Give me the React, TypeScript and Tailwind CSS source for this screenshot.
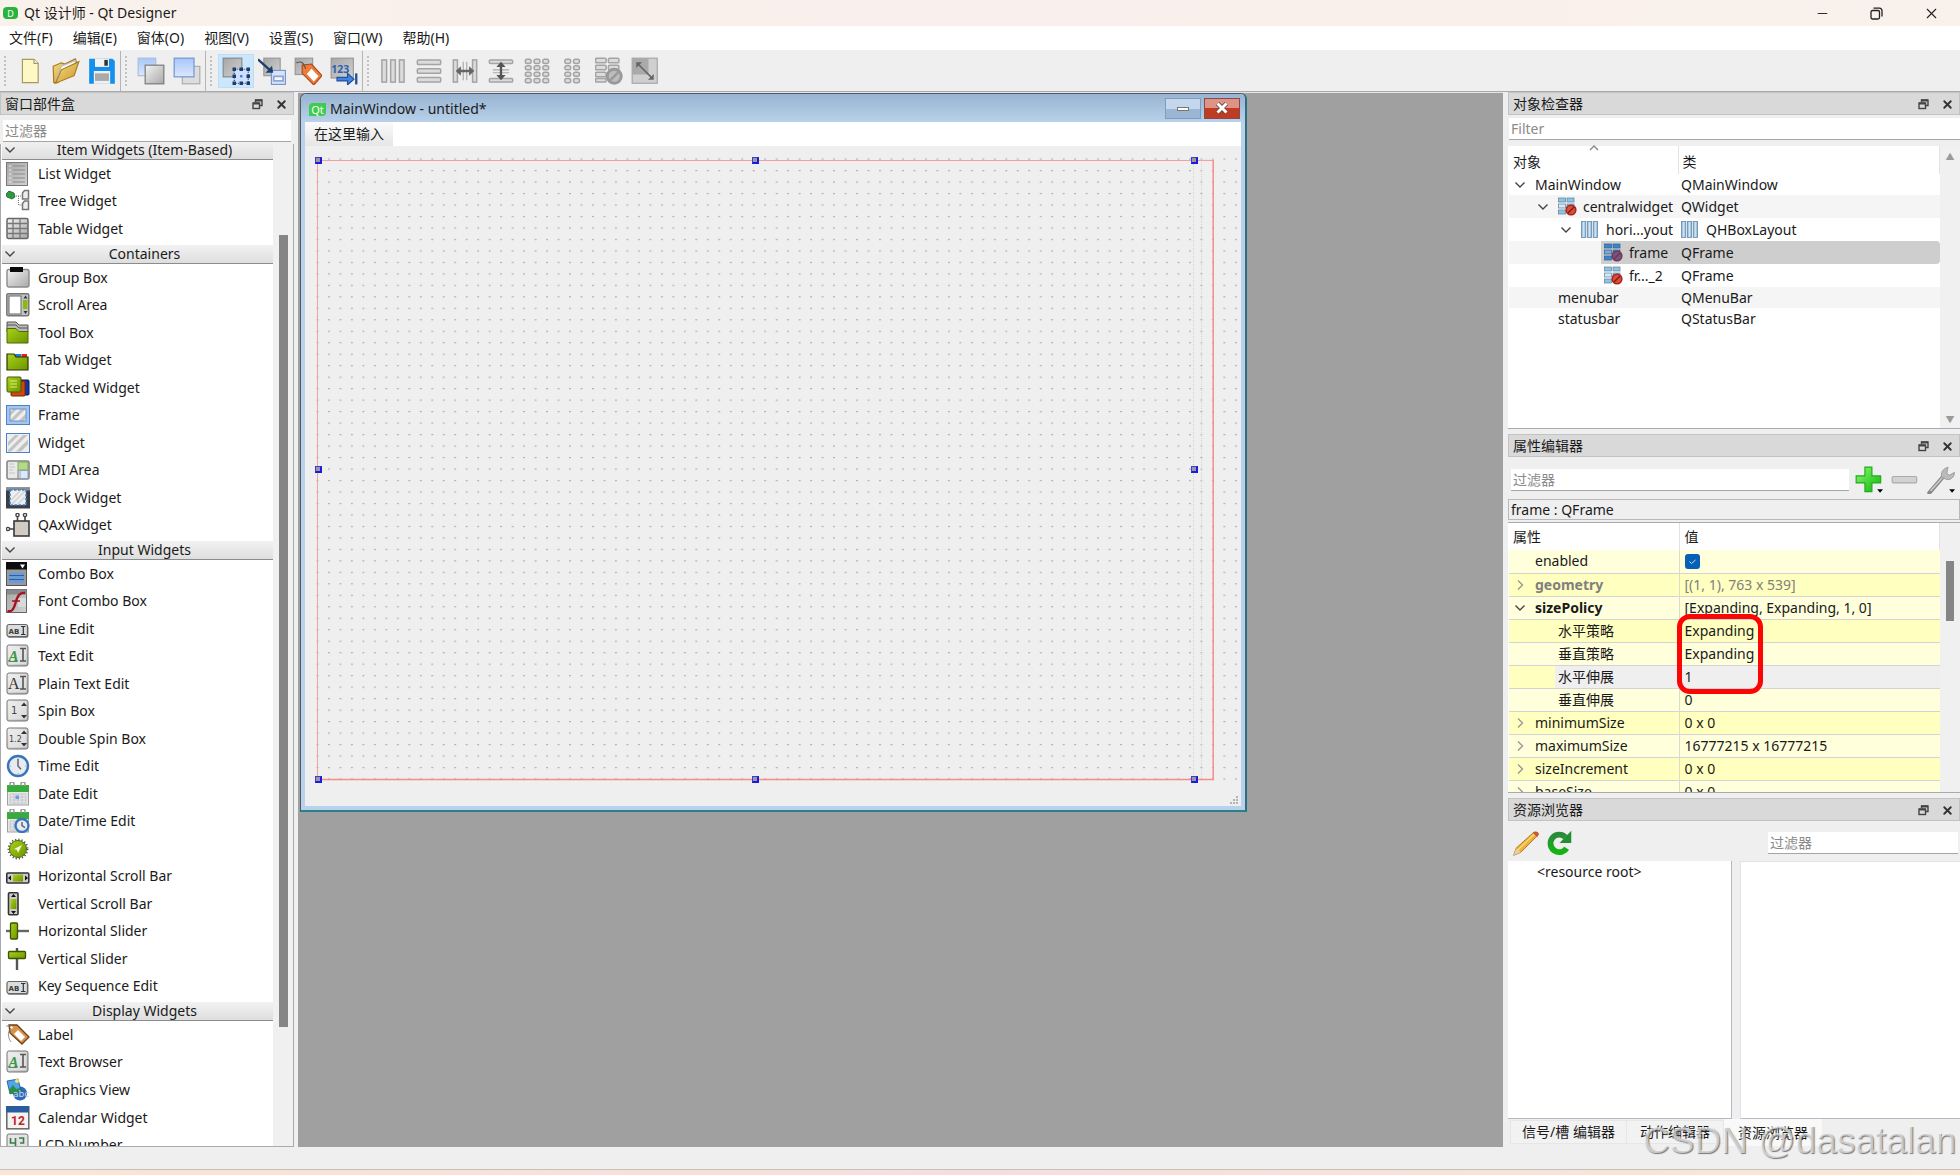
import type { ReactNode } from 'react';
import { Minus, X } from 'lucide-react';

interface WidgetItem {
  label: string;
  icon: ReactNode;
}

interface WidgetCategory {
  title: string;
  listClass: string;
  items: WidgetItem[];
}

interface ObjectRow {
  name: string;
  cls: string;
  indent: string;
  icon?: 'broken' | 'hbox';
  open?: boolean;
  selected?: boolean;
}

interface PropertyRow {
  name: string;
  value: string;
  kind: 'leaf' | 'closed' | 'open' | 'child';
  tone: string;
  nameClass?: string;
  valueClass?: string;
}

function Svg({ children, size = 24 }: { children: ReactNode; size?: number }) {
  return (
    <svg width={size} height={size} viewBox="0 0 24 24" fill="none" className="shrink-0" aria-hidden="true">
      {children}
    </svg>
  );
}

// Shared gradients, referenced by id from all the icons
function Gradients() {
  return (
    <svg width="0" height="0" className="absolute" aria-hidden="true">
      <defs>
        <linearGradient id="gray" x1="0" y1="0" x2="1" y2="1">
          <stop offset="0" stopColor="#f4f4f4" />
          <stop offset="1" stopColor="#a8a8a8" />
        </linearGradient>
        <linearGradient id="panel" x1="0" y1="0" x2="1" y2="1">
          <stop offset="0" stopColor="#a6a6a6" />
          <stop offset="1" stopColor="#d2d2d2" />
        </linearGradient>
        <linearGradient id="blue" x1="0" y1="0" x2="0" y2="1">
          <stop offset="0" stopColor="#a8c6fb" />
          <stop offset="1" stopColor="#dbe7fd" />
        </linearGradient>
        <linearGradient id="green" x1="0" y1="0" x2="1" y2="1">
          <stop offset="0" stopColor="#a9d21a" />
          <stop offset="1" stopColor="#6c9400" />
        </linearGradient>
        <linearGradient id="gold" x1="0" y1="0" x2="1" y2="1">
          <stop offset="0" stopColor="#f7dc84" />
          <stop offset="1" stopColor="#c9962a" />
        </linearGradient>
        <linearGradient id="steel" x1="0" y1="0" x2="1" y2="0">
          <stop offset="0" stopColor="#7fa9c8" />
          <stop offset="0.5" stopColor="#cfe8f8" />
          <stop offset="1" stopColor="#7fa9c8" />
        </linearGradient>
        <linearGradient id="lime" x1="0" y1="0" x2="1" y2="1">
          <stop offset="0" stopColor="#8dfb6f" />
          <stop offset="1" stopColor="#0cb30a" />
        </linearGradient>
        <linearGradient id="refresh" x1="0" y1="0" x2="0" y2="1">
          <stop offset="0" stopColor="#2c8a3c" />
          <stop offset="1" stopColor="#12b512" />
        </linearGradient>
      </defs>
    </svg>
  );
}

function TextBoxIcon({ children }: { children: ReactNode }) {
  return (
    <Svg>
      <rect x="1" y="1" width="21" height="21" rx="2" fill="url(#gray)" stroke="#777" />
      <rect x="2.500" y="2.500" width="18" height="18" fill="#ececec" fillOpacity="0.700" />
      {children}
    </Svg>
  );
}

function CursorBar() {
  return <path d="M14 4.500h6M14 17h6M17 4.500V17" stroke="#555" strokeWidth="1.600" />;
}

function AbiIcon() {
  return (
    <Svg>
      <rect x="1.500" y="8.500" width="21" height="12.500" rx="2" fill="#8f8f8f" />
      <rect x="1" y="7.500" width="20.500" height="12" rx="2" fill="#dcdcdc" stroke="#666" strokeWidth="1.200" />
      <text x="2.500" y="16.500" fontSize="7" fontWeight="700" fontFamily="DejaVu Sans" fill="#3a3a3a">AB</text>
      <path d="M15 9.500h4.500M15 17.500h4.500M17.300 9.500v8" stroke="#333" strokeWidth="1.200" />
    </Svg>
  );
}

function RichTextIcon() {
  return (
    <TextBoxIcon>
      <text x="2.500" y="16.500" fontSize="15" fontStyle="italic" fontWeight="700" fontFamily="Liberation Serif" fill="#3f9450">A</text>
      <path d="M2.500 17.500h9" stroke="#3f9450" />
      <CursorBar />
    </TextBoxIcon>
  );
}

function HatchIcon({ inner = false }: { inner?: boolean }) {
  return (
    <Svg>
      <rect x="0.500" y="2.500" width="23" height="19" fill="#eee" stroke="#4d82c4" />
      <path d="M2 19L17 4h4.500L5 20.500H2zM10 20.500L22 8.500v5l-7 7zM2 11l7-7h4L2 15z" fill="#c3c3c3" />
      {inner && <rect x="2.500" y="4.500" width="19" height="15" stroke="#a5c5ee" strokeWidth="3" />}
      {inner && <rect x="4" y="6" width="16" height="12" stroke="#5b8ac8" strokeWidth="0.800" />}
    </Svg>
  );
}

function ClockFace({ cx, cy, r }: { cx: number; cy: number; r: number }) {
  return (
    <g>
      <circle cx={cx} cy={cy} r={r} fill="#e6ebf0" stroke="#3a74bd" strokeWidth="2.400" />
      <path d={`M${cx} ${cy - r + 3}V${cy}l3 ${r / 3}`} stroke="#667" strokeWidth="1.500" />
    </g>
  );
}

function CalendarPage() {
  return (
    <g>
      <rect x="1.500" y="4" width="21" height="19" fill="#e6e6e6" stroke="#a0a0a0" />
      <path d="M1 3h22v7H1z" fill="#39ab3d" />
      <path d="M4 4v-2a2 2 0 014 0v2M15 4v-2a2 2 0 014 0v2" stroke="#999" strokeWidth="1.500" />
      <path d="M4 12h16M4 15h16M4 18h16M4 21h16M4 12v9M8 12v9M12 12v9M16 12v9M20 12v9" stroke="#bcc1ca" strokeWidth="0.800" />
    </g>
  );
}

const icons = {
  list: (
    <Svg>
      <rect x="0.500" y="0.500" width="21" height="23" fill="url(#panel)" stroke="#777" />
      <path d="M3 4h2M3 8h2M3 12h2M3 16h2M3 20h2" stroke="#eee" />
      <path d="M7 4h12M7 8h12M7 12h12M7 16h12M7 20h12" stroke="#8b8b8b" />
    </Svg>
  ),
  tree: (
    <Svg>
      <path d="M0 5l3-3 5 2 1 4-3 2-5-2z" fill="#2f9a45" stroke="#17612a" strokeWidth="0.800" />
      <path d="M10 7h6M12.500 7v9h4" stroke="#777" strokeDasharray="1 1" />
      <path d="M16.500 4l2-2.500h4V10h-6zM16.500 14.500l2-2.500h4v8.500h-6z" fill="#eee" stroke="#777" strokeWidth="1.500" />
    </Svg>
  ),
  table: (
    <Svg>
      <rect x="1" y="1.500" width="21" height="20" rx="1.500" fill="url(#gray)" stroke="#666" strokeWidth="1.500" />
      <path d="M1 6.500h21M1 11.500h21M1 16.500h21M7 1.500v20M14 1.500v20" stroke="#777" strokeWidth="1.300" />
    </Svg>
  ),
  groupBox: (
    <Svg>
      <rect x="1" y="3.500" width="22" height="17.500" rx="2" fill="url(#gray)" stroke="#8a8a8a" strokeWidth="1.400" />
      <path d="M4 1h13v5H4z" fill="#0a0a0a" />
    </Svg>
  ),
  scrollArea: (
    <Svg>
      <rect x="0.800" y="0.800" width="22" height="22" rx="1.500" fill="#c4c4c4" stroke="#777" strokeWidth="1.500" />
      <rect x="3" y="3" width="12" height="18" fill="#fff" stroke="#666" />
      <rect x="17" y="7" width="4.500" height="9" fill="#8bb80b" />
      <path d="M17.500 5.500l2-3 2 3zM17.500 18l2 3 2-3z" fill="#333" />
    </Svg>
  ),
  toolBox: (
    <Svg>
      <path d="M1 1h9l3 3h9v7H1z" fill="#bbb" stroke="#555" />
      <path d="M1 4h9l3 3h9" stroke="#555" />
      <path d="M1 7.500h9l3 3h9V22H1z" fill="url(#green)" stroke="#4d6b00" />
    </Svg>
  ),
  tabWidget: (
    <Svg>
      <path d="M9 6h6v5H9z" fill="#1d7fe0" />
      <path d="M15.500 6H21v5h-5.500z" fill="#e02222" />
      <path d="M1 6h7l2 3h12v13H1z" fill="url(#green)" stroke="#2b3500" strokeWidth="1.200" />
    </Svg>
  ),
  stacked: (
    <Svg>
      <rect x="10" y="4" width="13" height="15" rx="1" fill="#1736a0" stroke="#0a1a55" />
      <rect x="5" y="5" width="14" height="15" rx="1" fill="#cf4612" stroke="#7b2502" />
      <rect x="1" y="1" width="14" height="15" rx="1" fill="url(#green)" stroke="#435a00" />
      <path d="M4 5h7M4 8h7M4 11h7" stroke="#d9f07b" />
    </Svg>
  ),
  mdi: (
    <Svg>
      <rect x="1" y="3" width="22" height="18" rx="1.500" fill="#e9e9e9" stroke="#858585" strokeWidth="1.600" />
      <path d="M12 4h10v8H12z" fill="#b4d987" stroke="#7a9c58" strokeWidth="0.800" />
      <path d="M3 6h5M3 9h6M3 12h4M3 15h6" stroke="#c6c6c6" />
      <path d="M12 12v8.500" stroke="#777" />
      <rect x="14" y="12.500" width="8" height="8" fill="#dce8f8" stroke="#7d95bc" strokeWidth="0.800" />
    </Svg>
  ),
  dock: (
    <Svg>
      <rect y="1.500" width="24" height="21" fill="#3a3f45" />
      <path d="M0 1.500h24v3H0z" fill="#8a8d90" />
      <rect x="4" y="4" width="16" height="15" fill="#eee" stroke="#3d7fd0" strokeWidth="1.600" strokeDasharray="2.500 1.500" />
      <path d="M5 14l9-9M6 18L19 5M12 18l7-7" stroke="#d3d3d3" strokeWidth="1.500" />
    </Svg>
  ),
  qax: (
    <Svg>
      <circle cx="11.500" cy="2" r="1.600" stroke="#444" strokeWidth="1.400" />
      <circle cx="19" cy="2" r="1.600" stroke="#444" strokeWidth="1.400" />
      <circle cx="2" cy="16" r="1.600" stroke="#444" strokeWidth="1.400" />
      <path d="M11.500 3.500V8M19 3.500V8M3.500 16H8" stroke="#444" strokeWidth="1.600" />
      <rect x="8" y="8" width="15" height="15" fill="#d1cbc3" stroke="#3a3a3a" strokeWidth="1.600" />
    </Svg>
  ),
  combo: (
    <Svg>
      <rect x="0.500" y="1" width="20" height="22.500" fill="#9a9a9a" stroke="#555" />
      <path d="M0 0h21v7.500H0z" fill="#0d0d0d" />
      <path d="M14 2.500h5l-2.500 4z" fill="#fff" />
      <path d="M3 10.500h15v10.500H3z" fill="#6b9bd6" />
      <path d="M3 13.500h15M3 17.500h15" stroke="#2f5f9e" />
    </Svg>
  ),
  fontCombo: (
    <Svg>
      <rect x="0.500" y="0.500" width="20" height="23" fill="url(#panel)" stroke="#666" />
      <path d="M1 0.500h19.500v5H1z" fill="#8a8a8a" />
      <path d="M12 9h8v9h-8z" fill="#d9d9d9" />
      <path d="M1.500 22c4 1 6-1 8-8s4-11 9.500-10" stroke="#a51220" strokeWidth="2.400" />
      <path d="M6 12h8" stroke="#a51220" strokeWidth="1.500" />
    </Svg>
  ),
  plainText: (
    <TextBoxIcon>
      <text x="2" y="17" fontSize="16" fontFamily="Liberation Serif" fill="#333">A</text>
      <CursorBar />
    </TextBoxIcon>
  ),
  spin: (
    <TextBoxIcon>
      <text x="5" y="15" fontSize="10" fontFamily="DejaVu Sans" fill="#444">1</text>
      <path d="M15 7l3-3.500L21 7zM15 16l3 3.500 3-3.500z" fill="#333" />
    </TextBoxIcon>
  ),
  doubleSpin: (
    <TextBoxIcon>
      <text x="3" y="15" fontSize="8" fontFamily="DejaVu Sans" fill="#444">1.2</text>
      <path d="M15 7l3-3.500L21 7zM15 16l3 3.500 3-3.500z" fill="#333" />
    </TextBoxIcon>
  ),
  time: (
    <Svg>
      <ClockFace cx={12} cy={12} r={10} />
      <path d="M12 4v1M12 19v1M4 12h1M19 12h1" stroke="#9aa" />
    </Svg>
  ),
  date: (
    <Svg>
      <CalendarPage />
      <path d="M9.500 13.500h3.500v3.500H9.500z" fill="#6a9de0" />
    </Svg>
  ),
  dateTime: (
    <Svg>
      <CalendarPage />
      <ClockFace cx={16} cy={16.5} r={6.5} />
    </Svg>
  ),
  dial: (
    <Svg>
      <circle cx="12" cy="12" r="9.500" stroke="#555" strokeWidth="2" strokeDasharray="1.200 2" />
      <circle cx="12" cy="12" r="8.500" fill="url(#green)" stroke="#4f6d05" />
      <path d="M8 12l8-4-4 8-1-3z" fill="#f0f7d2" />
    </Svg>
  ),
  hScroll: (
    <Svg>
      <rect x="0.800" y="9" width="22" height="10" rx="1" fill="#ccc" stroke="#333" strokeWidth="1.600" />
      <rect x="7" y="10.500" width="10" height="7" fill="url(#green)" />
      <path d="M5 11.500v5L2 14zM19 11.500v5l3-2.500z" fill="#111" />
    </Svg>
  ),
  vScroll: (
    <Svg>
      <rect x="2.500" y="0.800" width="9.500" height="22" rx="1" fill="#ccc" stroke="#333" strokeWidth="1.600" />
      <rect x="4.500" y="7" width="6" height="10" fill="url(#green)" />
      <path d="M5 5h5L7.500 2zM5 19h5l-2.500 3z" fill="#111" />
    </Svg>
  ),
  hSlider: (
    <Svg>
      <path d="M0 12h23" stroke="#666" strokeWidth="2.400" />
      <rect x="4.500" y="4" width="7" height="16" rx="1" fill="url(#green)" stroke="#3e5200" strokeWidth="1.300" />
    </Svg>
  ),
  vSlider: (
    <Svg>
      <path d="M11 1v22" stroke="#555" strokeWidth="2.400" />
      <rect x="2.500" y="4.500" width="17" height="7" rx="1" fill="url(#green)" stroke="#3e5200" strokeWidth="1.300" />
    </Svg>
  ),
  label: (
    <Svg>
      <path d="M3 2l8 0 12 12-7 7L4 10z" fill="#d9924a" stroke="#6c4218" strokeWidth="1.300" />
      <path d="M12 7l7 7-4 4-7-7z" fill="#fff" />
      <circle cx="5.500" cy="4.500" r="1.300" fill="#fff" />
      <path d="M0 3h5M5 5c-4 4-3 10 0 14" stroke="#777" strokeWidth="0.800" />
    </Svg>
  ),
  graphics: (
    <Svg>
      <circle cx="14" cy="15.500" r="7" fill="#2b6cb8" />
      <path d="M1 3l11-2 3 12-11 3z" fill="#4fa5ee" stroke="#1c4f90" strokeWidth="0.800" />
      <path d="M3 12l4-5 3 4 4-1 1 3-11 3z" fill="#2d8f3c" />
      <circle cx="11" cy="3" r="2" fill="#ffe25a" />
      <text x="7" y="19" fontSize="9" fontFamily="DejaVu Sans" fill="#c9d6e8">abc</text>
    </Svg>
  ),
  calendar: (
    <Svg>
      <rect x="0.800" y="0.800" width="22" height="22" fill="#f3f3f3" stroke="#666" strokeWidth="1.500" />
      <path d="M0 0h23v6.500H0z" fill="#2a5d9e" />
      <text x="5" y="19" fontSize="12" fontWeight="700" fontFamily="Roboto" fill="#c22222">12</text>
    </Svg>
  ),
  lcd: (
    <Svg>
      <rect x="1" y="1" width="21" height="21" rx="2" fill="#e4e4e4" stroke="#777" />
      <path d="M4.500 5v5h5M9.500 5v8M13 5h4.500v5H14" stroke="#3b7a4c" strokeWidth="1.600" />
    </Svg>
  ),
};

const categories: WidgetCategory[] = [
  {
    title: 'Item Widgets (Item-Based)',
    listClass: 'h-[83px]',
    items: [
      { label: 'List Widget', icon: icons.list },
      { label: 'Tree Widget', icon: icons.tree },
      { label: 'Table Widget', icon: icons.table },
    ],
  },
  {
    title: 'Containers',
    listClass: 'h-[275px]',
    items: [
      { label: 'Group Box', icon: icons.groupBox },
      { label: 'Scroll Area', icon: icons.scrollArea },
      { label: 'Tool Box', icon: icons.toolBox },
      { label: 'Tab Widget', icon: icons.tabWidget },
      { label: 'Stacked Widget', icon: icons.stacked },
      { label: 'Frame', icon: <HatchIcon inner /> },
      { label: 'Widget', icon: <HatchIcon /> },
      { label: 'MDI Area', icon: icons.mdi },
      { label: 'Dock Widget', icon: icons.dock },
      { label: 'QAxWidget', icon: icons.qax },
    ],
  },
  {
    title: 'Input Widgets',
    listClass: 'h-[440px]',
    items: [
      { label: 'Combo Box', icon: icons.combo },
      { label: 'Font Combo Box', icon: icons.fontCombo },
      { label: 'Line Edit', icon: <AbiIcon /> },
      { label: 'Text Edit', icon: <RichTextIcon /> },
      { label: 'Plain Text Edit', icon: icons.plainText },
      { label: 'Spin Box', icon: icons.spin },
      { label: 'Double Spin Box', icon: icons.doubleSpin },
      { label: 'Time Edit', icon: icons.time },
      { label: 'Date Edit', icon: icons.date },
      { label: 'Date/Time Edit', icon: icons.dateTime },
      { label: 'Dial', icon: icons.dial },
      { label: 'Horizontal Scroll Bar', icon: icons.hScroll },
      { label: 'Vertical Scroll Bar', icon: icons.vScroll },
      { label: 'Horizontal Slider', icon: icons.hSlider },
      { label: 'Vertical Slider', icon: icons.vSlider },
      { label: 'Key Sequence Edit', icon: <AbiIcon /> },
    ],
  },
  {
    title: 'Display Widgets',
    listClass: 'h-[138px]',
    items: [
      { label: 'Label', icon: icons.label },
      { label: 'Text Browser', icon: <RichTextIcon /> },
      { label: 'Graphics View', icon: icons.graphics },
      { label: 'Calendar Widget', icon: icons.calendar },
      { label: 'LCD Number', icon: icons.lcd },
    ],
  },
];

const objectRows: ObjectRow[] = [
  { name: 'MainWindow', cls: 'QMainWindow', indent: 'pl-[3px]', open: true },
  { name: 'centralwidget', cls: 'QWidget', indent: 'pl-[26px]', icon: 'broken', open: true },
  { name: 'hori...yout', cls: 'QHBoxLayout', indent: 'pl-[49px]', icon: 'hbox', open: true },
  { name: 'frame', cls: 'QFrame', indent: 'pl-[95px]', icon: 'broken', selected: true },
  { name: 'fr..._2', cls: 'QFrame', indent: 'pl-[95px]', icon: 'broken' },
  { name: 'menubar', cls: 'QMenuBar', indent: 'pl-[49px]' },
  { name: 'statusbar', cls: 'QStatusBar', indent: 'pl-[49px]' },
];

const propertyRows: PropertyRow[] = [
  { name: 'enabled', value: '', kind: 'leaf', tone: 'bg-[#ffffdc]' },
  { name: 'geometry', value: '[(1, 1), 763 x 539]', kind: 'closed', tone: 'bg-[#ffffbf]', nameClass: 'font-bold text-[#808080]', valueClass: 'text-[#808080]' },
  { name: 'sizePolicy', value: '[Expanding, Expanding, 1, 0]', kind: 'open', tone: 'bg-[#ffffdc]', nameClass: 'font-bold' },
  { name: '水平策略', value: 'Expanding', kind: 'child', tone: 'bg-[#ffffbf]' },
  { name: '垂直策略', value: 'Expanding', kind: 'child', tone: 'bg-[#ffffdc]' },
  { name: '水平伸展', value: '1', kind: 'child', tone: 'bg-[#efefef]' },
  { name: '垂直伸展', value: '0', kind: 'child', tone: 'bg-[#ffffdc]' },
  { name: 'minimumSize', value: '0 x 0', kind: 'closed', tone: 'bg-[#ffffbf]' },
  { name: 'maximumSize', value: '16777215 x 16777215', kind: 'closed', tone: 'bg-[#ffffdc]' },
  { name: 'sizeIncrement', value: '0 x 0', kind: 'closed', tone: 'bg-[#ffffbf]' },
  { name: 'baseSize', value: '0 x 0', kind: 'closed', tone: 'bg-[#ffffdc]' },
];

const menus = ['文件(F)', '编辑(E)', '窗体(O)', '视图(V)', '设置(S)', '窗口(W)', '帮助(H)'];

function Chevron({ dir = 'down', className = 'text-[#444]' }: { dir?: 'down' | 'right' | 'up'; className?: string }) {
  const d = dir === 'down' ? 'M1.500 3.500L6 8l4.500-4.500' : dir === 'up' ? 'M2 8l4-4 4 4' : 'M4 1.500L8.500 6 4 10.500';
  return (
    <svg width="12" height="12" viewBox="0 0 12 12" fill="none" className={`shrink-0 ${className}`} aria-hidden="true">
      <path d={d} stroke="currentColor" strokeWidth="1.400" />
    </svg>
  );
}

function HBoxIcon() {
  return (
    <svg width="17" height="17" viewBox="0 0 16 16" className="shrink-0" aria-hidden="true">
      {[0, 5.5, 11].map((x) => (
        <rect key={x} x={x + 0.5} y="0.500" width="4" height="15" fill="url(#steel)" stroke="#6c8fae" strokeWidth="0.800" />
      ))}
    </svg>
  );
}

function BrokenLayoutIcon({ selected = false }: { selected?: boolean }) {
  return (
    <svg width="19" height="19" viewBox="0 0 19 19" className="shrink-0" aria-hidden="true">
      <g fill={selected ? '#3f86c8' : '#8fc4e6'} stroke={selected ? '#2a5d96' : '#587f9e'} strokeWidth="0.700">
        <rect x="0.500" y="1" width="7" height="4" />
        <rect x="9" y="1" width="7" height="4" />
        <rect x="0.500" y="7" width="7" height="4" fill={selected ? '#7fa9cf' : '#dbe7ee'} />
        <rect x="9" y="7" width="7" height="4" />
        <rect x="0.500" y="13" width="7" height="4" />
      </g>
      <circle cx="13" cy="13" r="4.800" fill={selected ? '#6d5a86' : '#d9503f'} stroke={selected ? '#7a3450' : '#a82418'} strokeWidth="1.600" />
      <path d="M10 16l6-6" stroke={selected ? '#7a3450' : '#8f1c12'} strokeWidth="1.600" />
    </svg>
  );
}

function DockTitle({ title }: { title: string }) {
  return (
    <header className="flex h-[23px] shrink-0 items-center border border-[#c3c3c3] bg-[#d9d9d9] pl-1 pr-1 pt-px">
      <h2 className="flex-1">{title}</h2>
      <button type="button" aria-label="浮动" className="mr-2 flex size-4 items-center justify-center">
        <svg width="11" height="11" viewBox="0 0 11 11" fill="none" stroke="#444" aria-hidden="true">
          <path d="M3.500 3V1h6.500v5.500H8" strokeWidth="1.400" />
          <path d="M3 1.500h7" strokeWidth="2" />
          <rect x="1" y="4" width="6.500" height="5.500" strokeWidth="1.400" />
          <path d="M1 4.500h6.500" strokeWidth="2" />
        </svg>
      </button>
      <button type="button" aria-label="关闭" className="flex size-4 items-center justify-center text-[#333]">
        <X size={13} strokeWidth={3.5} />
      </button>
    </header>
  );
}

function FilterInput({ placeholder, className }: { placeholder: string; className: string }) {
  return (
    <input
      type="text"
      placeholder={placeholder}
      aria-label={placeholder}
      className={`border-b border-[#a5a5a5] bg-white px-0.5 outline-none placeholder:text-[#8a8a8a] ${className}`}
    />
  );
}

function ToolButton({ label, active = false, children }: { label: string; active?: boolean; children: ReactNode }) {
  return (
    <button
      type="button"
      aria-label={label}
      className={`flex h-[34px] w-9 items-center justify-center ${active ? 'border border-[#b9dffb] bg-[#cce6fb]' : ''}`}
    >
      {children}
    </button>
  );
}

function ToolGroup({ children, last = false }: { children: ReactNode; last?: boolean }) {
  return (
    <div className={`flex items-center pl-1 ${last ? '' : 'border-r border-[#b4b4b4]'}`}>
      <span className="mr-1.5 h-[30px] border-l-2 border-dotted border-[#c2c2c2]" />
      {children}
    </div>
  );
}

const grayBar = { fill: '#dcdcdc', stroke: '#a4a4a4', strokeWidth: 1.3 };

function Toolbar() {
  return (
    <div className="flex h-[42px] shrink-0 border-b border-[#a9a9b0] bg-[#efefef] pt-px" role="toolbar">
      <ToolGroup>
        <ToolButton label="新建">
          <Svg size={28}>
            <path d="M5.500 2h10l3.500 3.500V22H5.500z" fill="#fdf8c4" stroke="#a59863" />
            <path d="M15.500 2v3.500H19" fill="#fff" stroke="#a59863" />
          </Svg>
        </ToolButton>
        <ToolButton label="打开">
          <Svg size={28}>
            <path d="M1 8l7-3 3 1 9-4.500 1 3L5 22H1.500z" fill="url(#gold)" stroke="#a67c22" />
            <path d="M4 18L8 8l12-5v6z" fill="#fafafa" stroke="#bbb" />
            <path d="M3 22.500L8 11l15-7-4 12z" fill="url(#gold)" stroke="#a67c22" />
          </Svg>
        </ToolButton>
        <ToolButton label="保存">
          <Svg size={28}>
            <path d="M1 1.500h20l2 2V23H1z" fill="#1390ee" />
            <path d="M6 1.500h12v7H6z" fill="#f2f2f2" />
            <path d="M14 2.500h3v5h-3z" fill="#333" />
            <path d="M5 12h14v11H5z" fill="#f0f0f0" />
            <path d="M6 14h12v6.500H6z" fill="#aaa" />
          </Svg>
        </ToolButton>
      </ToolGroup>
      <ToolGroup>
        <ToolButton label="置后">
          <Svg size={28}>
            <rect x="1" y="1" width="15" height="15" fill="url(#blue)" stroke="#a9bddb" />
            <rect x="7" y="7" width="16" height="16" fill="url(#gray)" stroke="#777" />
          </Svg>
        </ToolButton>
        <ToolButton label="置前">
          <Svg size={28}>
            <rect x="8" y="8" width="15" height="15" fill="#ddd" stroke="#aaa" />
            <rect x="1" y="1" width="17" height="16" fill="url(#blue)" stroke="#6f94d0" />
          </Svg>
        </ToolButton>
      </ToolGroup>
      <ToolGroup>
        <ToolButton label="编辑窗口部件" active>
          <Svg size={28}>
            <rect x="1" y="1" width="16" height="16" fill="url(#panel)" stroke="#888" />
            <rect x="10.500" y="10.500" width="12" height="12" fill="#cfe0ff" stroke="#23406e" strokeDasharray="1 1" />
            <path d="M9 9h3v3H9zM15 9h3v3h-3zM21 9h3v3h-3zM9 15h3v3H9zM21 15h3v3h-3zM9 21h3v3H9zM15 21h3v3h-3zM21 21h3v3h-3z" fill="#1d3d6e" />
            <path d="M15.500 15.500h2v2h-2z" fill="#3a78e0" />
          </Svg>
        </ToolButton>
        <ToolButton label="编辑信号/槽">
          <Svg size={28}>
            <rect x="5" y="1" width="14" height="15" fill="url(#panel)" stroke="#999" />
            <rect x="11.500" y="11.500" width="12" height="12" fill="#d5e3fb" stroke="#7c96c8" />
            <path d="M13.500 16.500h8v4h-8z" fill="#f4f8ff" stroke="#8ea7d3" strokeWidth="1.500" />
            <path d="M0 2l10 9" stroke="#1f3f6d" strokeWidth="2" />
            <path d="M13 13.500H6.500l5.500-6z" fill="#1f3f6d" />
          </Svg>
        </ToolButton>
        <ToolButton label="编辑伙伴">
          <Svg size={28}>
            <rect x="1" y="1" width="15" height="14" fill="url(#panel)" stroke="#999" />
            <path d="M7 7l8-1 9 10-7 8L7 14z" fill="#ef7b3a" stroke="#a8491c" />
            <path d="M15 10l6 6.500-4 4.500-6-6.500z" fill="#fff" />
            <path d="M2 5c5-2 6 0 8 5" stroke="#555" />
          </Svg>
        </ToolButton>
        <ToolButton label="编辑 Tab 顺序">
          <Svg size={28}>
            <rect x="1" y="1" width="19" height="17" fill="url(#panel)" stroke="#999" />
            <text x="1" y="14" fontSize="9" fontWeight="700" fontFamily="Noto Sans" fill="#2f5fae">123</text>
            <path d="M6 17.500h9V14l5.500 5-5.500 5v-3.500H6z" fill="#4285e0" stroke="#23509c" />
            <path d="M22.500 14v9.500" stroke="#23509c" strokeWidth="2" />
          </Svg>
        </ToolButton>
      </ToolGroup>
      <ToolGroup last>
        <ToolButton label="水平布局">
          <Svg size={28}>
            <g {...grayBar}>
              <rect x="2.500" y="2.500" width="4" height="19" />
              <rect x="10" y="2.500" width="4" height="19" />
              <rect x="17.500" y="2.500" width="4" height="19" />
            </g>
          </Svg>
        </ToolButton>
        <ToolButton label="垂直布局">
          <Svg size={28}>
            <g {...grayBar}>
              <rect x="2" y="2.500" width="20" height="4" rx="1" />
              <rect x="2" y="10" width="20" height="4" rx="1" />
              <rect x="2" y="17.500" width="20" height="4" rx="1" />
            </g>
          </Svg>
        </ToolButton>
        <ToolButton label="使用分裂器水平布局">
          <Svg size={28}>
            <g {...grayBar}>
              <rect x="2" y="2.500" width="3.500" height="19" />
              <rect x="18.500" y="2.500" width="3.500" height="19" />
            </g>
            <path d="M10.500 4v16M13.500 4v16" stroke="#aaa" />
            <path d="M4 12l4.500-4v3h7V8l4.500 4-4.500 4v-3h-7v3z" fill="#666" />
          </Svg>
        </ToolButton>
        <ToolButton label="使用分裂器垂直布局">
          <Svg size={28}>
            <g {...grayBar}>
              <rect x="2" y="2.500" width="20" height="3" rx="1" />
              <rect x="2" y="18.500" width="20" height="3" rx="1" />
            </g>
            <path d="M5 11h14M5 13.500h14" stroke="#aaa" />
            <path d="M12 4l4 4.500h-3v7h3L12 20l-4-4.500h3v-7H8z" fill="#555" />
          </Svg>
        </ToolButton>
        <ToolButton label="栅格布局">
          <Svg size={28}>
            <g {...grayBar}>
              {[2, 9.5, 17].map((x) => [2, 7.5, 13, 18.5].map((y) => <rect key={`${x}-${y}`} x={x} y={y} width="5" height="3.500" rx="1.500" />))}
            </g>
          </Svg>
        </ToolButton>
        <ToolButton label="表单布局">
          <Svg size={28}>
            <g {...grayBar}>
              {[5, 12.5].map((x) => [2, 7.5, 13, 18.5].map((y) => <rect key={`${x}-${y}`} x={x} y={y} width="5" height="3.500" rx="1.500" />))}
            </g>
          </Svg>
        </ToolButton>
        <ToolButton label="打破布局">
          <Svg size={28}>
            <g {...grayBar}>
              {[0.5, 11.5].map((x) => [1, 7, 13].map((y) => <rect key={`${x}-${y}`} x={x} y={y} width="9" height="4" rx="1" />))}
              <rect x="0.500" y="18.500" width="9" height="3" rx="1" />
            </g>
            <circle cx="16.500" cy="16.500" r="6" fill="#bdbdbd" stroke="#999" strokeWidth="2.500" />
            <path d="M12.500 20.500l8-8" stroke="#999" strokeWidth="2" />
          </Svg>
        </ToolButton>
        <ToolButton label="调整大小">
          <Svg size={28}>
            <rect x="1" y="1" width="21.500" height="21.500" fill="#cfcfcf" stroke="#a5a5a5" />
            <rect x="1" y="1" width="14" height="14" fill="#aaa" />
            <path d="M6 6l12 12" stroke="#666" strokeWidth="1.500" />
            <path d="M4.500 4.500h5l-5 5zM19.500 19.500v-5l-5 5z" fill="#666" />
          </Svg>
        </ToolButton>
      </ToolGroup>
    </div>
  );
}

function WidgetBox() {
  return (
    <aside className="flex w-[294px] shrink-0 flex-col">
      <DockTitle title="窗口部件盒" />
      <FilterInput placeholder="过滤器" className="mx-[3px] mt-[5px] h-[22px]" />
      <div className="mt-0.5 flex min-h-0 flex-1 border-x border-b border-[#a9a9b0] bg-white">
        <div className="min-w-0 flex-1 overflow-hidden pl-px">
          {categories.map((category, index) => (
            <section key={category.title} className={`pb-0.5 ${index === 0 ? '-mt-[3px]' : ''}`}>
              <h3 className="flex h-[19px] items-center border-b border-[#8c8c8c] bg-gradient-to-b from-[#f2f2f2] to-[#dedede] pl-0.5">
                <Chevron />
                <span className="flex-1 text-center">{category.title}</span>
              </h3>
              <ul className={`grid auto-rows-fr ${category.listClass}`}>
                {category.items.map((item) => (
                  <li key={item.label} className="flex items-center gap-2 pl-1">
                    {item.icon}
                    {item.label}
                  </li>
                ))}
              </ul>
            </section>
          ))}
        </div>
        <div className="w-5 bg-[#f0f0f0] px-1.5 pt-[91px]">
          <div className="h-[792px] w-[9px] bg-[#858585]" />
        </div>
      </div>
    </aside>
  );
}

const handles = [
  'left-[10px] top-[11px]',
  'left-[447px] top-[11px]',
  'left-[886px] top-[11px]',
  'left-[10px] top-[320px]',
  'left-[886px] top-[320px]',
  'left-[10px] top-[630px]',
  'left-[447px] top-[630px]',
  'left-[886px] top-[630px]',
];

function FormWindow() {
  return (
    <section className="absolute left-0.5 top-0 flex h-[719px] w-[947px] flex-col rounded-t-md border border-[#4d5a66] border-b-[#2c7f8c] border-r-[#2c6f80] border-b-2 border-r-2 bg-[#b9d1ea] px-1 pb-1">
      <header className="-mx-1 flex h-7 shrink-0 items-center rounded-t-md bg-gradient-to-b from-[#98b4d2] to-[#b9d1ea] pl-2 pr-[5px]">
        <span className="mt-0.5 flex h-[13px] w-[17px] items-center justify-center rounded-br-sm rounded-tl-sm bg-[#3fcb50] text-[11px] leading-none text-white">Qt</span>
        <h2 className="ml-1 mt-0.5 flex-1">MainWindow - untitled*</h2>
        <button type="button" aria-label="最小化" className="mr-[3px] flex h-[21px] w-9 items-center justify-center border border-[#7f9cbc] bg-gradient-to-b from-[#c4d7ec] from-50% to-[#9bb6d4] to-50%">
          <span className="mt-0.5 h-1 w-3 border border-[#777] bg-white" />
        </button>
        <button type="button" aria-label="关闭" className="flex h-[21px] w-9 items-center justify-center border border-[#8c4a44] bg-gradient-to-b from-[#dd9487] from-45% to-[#bf3c24] to-50%">
          <svg width="14" height="12" viewBox="0 0 14 12" aria-hidden="true">
            <path d="M2.500 1.500l9 9M11.500 1.500l-9 9" stroke="#6b3a36" strokeWidth="4.500" />
            <path d="M2.500 1.500l9 9M11.500 1.500l-9 9" stroke="#fff" strokeWidth="3" />
          </svg>
        </button>
      </header>
      <div className="flex h-6 shrink-0 bg-white">
        <button type="button" className="w-[88px] bg-gradient-to-b from-[#fafafa] to-[#e6e6e6] pl-[9px] text-left">在这里输入</button>
      </div>
      <div className="relative min-h-0 flex-1 bg-[#efefef]">
        {/* snap grid, selected frame and its layout outline */}
        <svg width="100%" height="100%" className="absolute inset-0" aria-hidden="true">
          <defs>
            <pattern id="dots" width="11.480" height="11.480" patternUnits="userSpaceOnUse" x="0" y="1">
              <rect x="0" y="0" width="2" height="1.200" fill="#b0b0b0" />
            </pattern>
          </defs>
          <rect x="4" y="8" width="932" height="628" fill="url(#dots)" />
          <path d="M888.500 14v619M896.500 14v619M896.500 14h11" stroke="#d3d3d3" strokeDasharray="1 1" />
          <path d="M12.500 633V14.500" stroke="#f2a0a0" />
          <path d="M12 14.500h896" stroke="#f2a0a0" />
          <path d="M908.200 14v620M12 633.500h897" stroke="#f58d8d" strokeWidth="1.500" />
          <path d="M931 650h2v2h-2zM928 653h2v2h-2zM931 653h2v2h-2zM925 656h2v2h-2zM928 656h2v2h-2zM931 656h2v2h-2z" fill="#b4b4b4" />
        </svg>
        {handles.map((pos) => (
          <span key={pos} className={`absolute size-[7px] border border-[#3c3cd8] border-b-2 border-r-2 border-b-[#1a1ae0] border-r-[#1a1ae0] bg-[#999] ${pos}`} />
        ))}
      </div>
    </section>
  );
}

function ObjectInspector() {
  return (
    <section className="flex shrink-0 flex-col">
      <DockTitle title="对象检查器" />
      <FilterInput placeholder="Filter" className="ml-px mt-[3px] h-[22px]" />
      <div className="mt-1.5 flex h-[283px] border-b border-[#a9a9b0] bg-white">
        <div className="min-w-0 flex-1 pl-px">
          <table className="w-full table-fixed border-collapse text-left">
            <colgroup>
              <col className="w-[169px]" />
              <col />
            </colgroup>
            <thead>
              <tr className="h-7">
                <th className="relative border-r border-[#e3e3e3] pl-1 pt-1 font-normal">
                  对象
                  <Chevron dir="up" className="absolute left-[79px] -top-1 text-[#888]" />
                </th>
                <th className="border-r border-[#e3e3e3] pl-1 pt-1 font-normal">类</th>
              </tr>
            </thead>
            <tbody>
              {objectRows.map((row, index) => (
                <tr key={row.name} className={`${row.icon ? 'h-[23px]' : 'h-[21px]'} ${index % 2 ? 'bg-[#f5f5f5]' : ''}`}>
                  <td className="p-0">
                    <div className={`flex items-center whitespace-nowrap ${row.indent} ${row.selected ? 'bg-[linear-gradient(to_right,transparent_92px,#cecece_92px)]' : ''}`}>
                      {row.open && <Chevron className="ml-0.5 mr-[9px] text-[#444]" />}
                      <span className={`flex items-center ${row.icon ? 'h-[23px]' : 'h-[21px]'} ${row.icon === 'hbox' ? 'gap-2' : 'gap-1.5'}`}>
                        {row.icon === 'broken' && <BrokenLayoutIcon selected={row.selected} />}
                        {row.icon === 'hbox' && <HBoxIcon />}
                        {row.name}
                      </span>
                    </div>
                  </td>
                  <td className={`p-0 pl-[3px] ${row.selected ? 'rounded-r-sm bg-[#cecece]' : ''}`}>
                    <span className="flex items-center gap-2">
                      {row.icon === 'hbox' && <HBoxIcon />}
                      {row.cls}
                    </span>
                  </td>
                </tr>
              ))}
            </tbody>
          </table>
        </div>
        <div className="flex w-5 flex-col items-center justify-between bg-[#f0f0f0] pb-1 pt-1.5 text-[9px] leading-none text-[#9a9a9a]">
          <span>▲</span>
          <span>▼</span>
        </div>
      </div>
    </section>
  );
}

function PropertyEditor() {
  return (
    <section className="mt-[5px] flex shrink-0 flex-col">
      <DockTitle title="属性编辑器" />
      <div className="flex h-[42px] items-center pl-[3px] pr-[3px] pt-1">
        <FilterInput placeholder="过滤器" className="h-[22px] min-w-0 flex-1" />
        <button type="button" aria-label="添加动态属性" className="ml-1 flex w-8 justify-center">
          <Svg size={28}>
            <path d="M8.500 1h6v7.500H22v6h-7.500V22h-6v-7.500H1v-6h7.500z" fill="url(#lime)" stroke="#23a91c" />
            <path d="M19 20h5l-2.500 3z" fill="#000" />
          </Svg>
        </button>
        <button type="button" aria-label="移除动态属性" className="ml-1 flex w-8 justify-center">
          <Svg size={28}>
            <rect x="1" y="9" width="21" height="5.500" rx="1" fill="#d2d2d2" stroke="#aaa" />
          </Svg>
        </button>
        <button type="button" aria-label="配置" className="ml-1 flex w-8 justify-center">
          <Svg size={28}>
            <path d="M2 23L14 9" stroke="#888" strokeWidth="3.500" strokeLinecap="round" />
            <path d="M3 21.500L14 9" stroke="#ccc" strokeWidth="1.300" />
            <path d="M13 10c-2-4 1-8 5-9l-1 5 2 2 4.500-2.500c0 4.500-4 7.500-8 5.500z" fill="#bbb" stroke="#999" strokeWidth="0.800" />
            <path d="M19 20h5l-2.500 3z" fill="#000" />
          </Svg>
        </button>
      </div>
      <p className="h-[21px] border border-[#b9b9b9] pl-0.5 leading-[19px]">frame : QFrame</p>
      <div className="relative mt-0.5 flex h-[271px] overflow-hidden border-y border-[#a9a9b0] bg-white">
        <div className="min-w-0 flex-1 pl-px">
          <table className="w-full table-fixed border-collapse text-left">
            <colgroup>
              <col className="w-[170px]" />
              <col />
            </colgroup>
            <thead>
              <tr className="h-[27px]">
                <th className="border-r border-[#e3e3e3] pl-1 font-normal">属性</th>
                <th className="border-r border-[#e3e3e3] pl-[5px] font-normal">值</th>
              </tr>
            </thead>
            <tbody>
              {propertyRows.map((row) => (
                <tr key={row.name} className={`h-[23px] border-b border-[#d4d4d4] leading-[22px] ${row.tone}`}>
                  <td className="border-r border-[#dcdccc] p-0">
                    <div className={`flex items-center ${row.name === '水平伸展' ? 'bg-[linear-gradient(to_right,#ffffbf_46px,transparent_46px)]' : ''}`}>
                      {row.kind === 'closed' && <Chevron dir="right" className="ml-[5px] mr-[9px] text-[#999]" />}
                      {row.kind === 'open' && <Chevron className="ml-[5px] mr-[9px] text-[#444]" />}
                      {row.kind === 'leaf' && <span className="w-[26px]" />}
                      {row.kind === 'child' && <span className="w-[49px]" />}
                      <span className={row.nameClass}>{row.name}</span>
                    </div>
                  </td>
                  <td className={`p-0 pl-[5px] ${row.valueClass ?? ''}`}>
                    {row.name === 'enabled' ? (
                      <span className="relative flex h-[22px] items-center">
                        <input type="checkbox" defaultChecked aria-label="enabled" className="size-[15px] appearance-none rounded-[3px] bg-[#0560b6]" />
                        <svg width="9" height="9" viewBox="0 0 9 9" fill="none" className="pointer-events-none absolute left-[3px]" aria-hidden="true">
                          <path d="M1.500 4.500L3.500 6.500 7.500 3" stroke="#cfe2f5" />
                        </svg>
                      </span>
                    ) : (
                      row.value
                    )}
                  </td>
                </tr>
              ))}
            </tbody>
          </table>
        </div>
        <div className="w-5 bg-[#f0f0f0] px-1.5 pt-[38px]">
          <div className="h-[60px] w-2 bg-[#858585]" />
        </div>
        <div className="pointer-events-none absolute left-[169px] top-[91px] h-[80px] w-[86px] rounded-[13px] border-[5px] border-[#fb0505]" />
      </div>
    </section>
  );
}

function ResourceBrowser() {
  return (
    <section className="mt-[5px] flex min-h-0 flex-1 flex-col">
      <DockTitle title="资源浏览器" />
      <div className="flex h-10 shrink-0 items-center pl-1 pr-0.5 pt-[3px]">
        <button type="button" aria-label="编辑资源">
          <Svg size={28}>
            <path d="M1.500 22.500l2-6L19 2.500l3 3L7.500 20z" fill="#eeb23a" stroke="#a8741a" strokeWidth="0.800" />
            <path d="M1.500 22.500l2-6 4 3.500z" fill="#e8cfa0" />
            <path d="M18 3.500c1-2 5-2 5 1l-1.500 2.500z" fill="#c9583a" />
            <path d="M5 18L19 4.500" stroke="#fbdc86" />
          </Svg>
        </button>
        <button type="button" aria-label="重新加载" className="ml-[5px]">
          <Svg size={28}>
            <path d="M18.500 16.500a7.500 7.500 0 11-1-9.500" stroke="url(#refresh)" strokeWidth="5" />
            <path d="M22.500 1.500v10.500H12.500z" fill="#238f33" />
          </Svg>
        </button>
        <FilterInput placeholder="过滤器" className="ml-auto h-[22px] w-[190px]" />
      </div>
      <div className="flex min-h-0 flex-1 gap-2">
        <div className="w-[224px] border-b border-r border-[#b3b8c2] bg-white pl-[29px] pt-0.5">&lt;resource root&gt;</div>
        <div className="flex-1 border-b border-l border-t border-[#e3e3e3] border-b-[#b3b8c2] bg-white" />
      </div>
      <div className="flex h-7 shrink-0 items-start pl-0.5" role="tablist">
        <button type="button" role="tab" aria-selected="false" className="mt-px h-6 w-[117px] border border-[#e6e6e6] bg-[#f2f2f2]">信号/槽 编辑器</button>
        <button type="button" role="tab" aria-selected="false" className="mt-px h-6 w-[97px] border border-l-0 border-[#e6e6e6] bg-[#f2f2f2]">动作编辑器</button>
        <button type="button" role="tab" aria-selected="true" className="h-[27px] w-[98px] bg-[#f9f9f9]">资源浏览器</button>
      </div>
    </section>
  );
}

export default function App() {
  return (
    <div className="relative flex h-screen flex-col overflow-hidden bg-[#efefef] font-['Noto_Sans','Noto_Sans_CJK_SC',sans-serif] text-[14px] leading-[18px] text-[#1a1a1a]">
      <Gradients />
      <header className="flex h-[26px] shrink-0 items-center bg-gradient-to-r from-[#f9f1eb] via-[#f9efec] to-[#f9f1eb] pl-[3px]">
        <span className="flex h-3 w-[15px] items-center justify-center rounded-sm bg-[#28b43c] text-[9px] leading-none text-white">D</span>
        <h1 className="ml-1.5 flex-1">Qt 设计师 - Qt Designer</h1>
        <div className="flex items-center gap-10 pr-5 text-[#222]">
          <button type="button" aria-label="最小化"><Minus size={15} strokeWidth={1.5} /></button>
          <button type="button" aria-label="还原">
            <svg width="13" height="13" viewBox="0 0 13 13" fill="none" stroke="currentColor" aria-hidden="true">
              <rect x="1" y="3.500" width="8.500" height="8.500" rx="1.500" strokeWidth="1.300" />
              <path d="M3.500 1.200H9.500a2.500 2.500 0 012.500 2.500v5.800" strokeWidth="1.300" />
            </svg>
          </button>
          <button type="button" aria-label="关闭"><X size={17} strokeWidth={1.5} /></button>
        </div>
      </header>
      <nav className="flex h-6 shrink-0 items-center gap-5 bg-white pl-[9px]">
        {menus.map((menu) => (
          <button key={menu} type="button">{menu}</button>
        ))}
      </nav>
      <Toolbar />
      <div className="flex min-h-0 flex-1">
        <WidgetBox />
        <main className="relative ml-1 min-w-0 flex-1 overflow-hidden border-t border-[#e5e5ea] bg-[#a0a0a0]">
          <FormWindow />
        </main>
        <aside className="ml-[5px] flex w-[452px] shrink-0 flex-col">
          <ObjectInspector />
          <PropertyEditor />
          <ResourceBrowser />
        </aside>
      </div>
      <footer className="h-[28px] shrink-0">
        <div className="h-[23px] border-b border-[#c6c0bc]" />
        <div className="h-[5px] bg-gradient-to-r from-[#fae5d6] via-[#f6dedb] to-[#fae8d6]" />
      </footer>
      <div className="pointer-events-none absolute bottom-3 right-1 font-['Liberation_Sans',sans-serif] text-[37px] leading-[44px] text-white/60 [text-shadow:1px_1px_1px_rgba(90,90,90,0.8)]">
        CSDN @dasatalan
      </div>
    </div>
  );
}
